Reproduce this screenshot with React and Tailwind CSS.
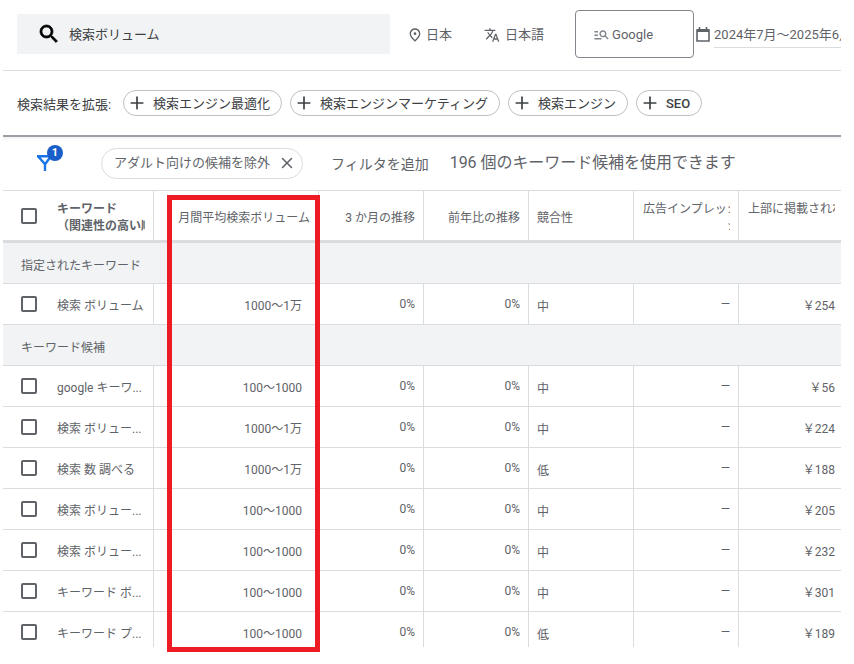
import React from "react";
import { Plus, X } from "lucide-react";

const cols = "grid grid-cols-[151px_165px_105px_105px_105px_105px_102px]";

const rows = [
  { type: "section", label: "指定されたキーワード" },
  { keyword: "検索 ボリューム", volume: "1000〜1万", comp: "中", bid: "￥254" },
  { type: "section", label: "キーワード候補" },
  { keyword: "google キーワ...", volume: "100〜1000", comp: "中", bid: "￥56" },
  { keyword: "検索 ボリュー...", volume: "1000〜1万", comp: "中", bid: "￥224" },
  { keyword: "検索 数 調べる", volume: "1000〜1万", comp: "低", bid: "￥188" },
  { keyword: "検索 ボリュー...", volume: "100〜1000", comp: "中", bid: "￥205" },
  { keyword: "検索 ボリュー...", volume: "100〜1000", comp: "中", bid: "￥232" },
  { keyword: "キーワード ボ...", volume: "100〜1000", comp: "中", bid: "￥301" },
  { keyword: "キーワード プ...", volume: "100〜1000", comp: "低", bid: "￥189" },
];

const chips = [
  { label: "検索エンジン最適化", w: "w-[159px]", text: "font-normal" },
  { label: "検索エンジンマーケティング", w: "w-[210px]", text: "font-normal" },
  { label: "検索エンジン", w: "w-[120px]", text: "font-normal" },
  { label: "SEO", w: "w-[66px]", text: "font-medium" },
];

const Icon = ({ d, className }) => (
  <svg viewBox="0 0 24 24" className={className} fill="currentColor">
    <path d={d} />
  </svg>
);

const Checkbox = () => <div className="w-4 h-4 border-2 border-[#5f6368] rounded-[2px] shrink-0" />;

export default function App() {
  return (
    <div
      className="relative w-[854px] h-[664px] overflow-hidden bg-white text-[#3c4043]"
      style={{ fontFamily: 'Roboto, "Noto Sans CJK JP", sans-serif' }}
    >
      <div className="w-[838px] h-[647px] ml-[3px] overflow-hidden">
        {/* top bar */}
        <div className="flex items-center h-[71px] border-b border-[#dadce0] pb-[1px] whitespace-nowrap">
          <div className="flex items-center shrink-0 w-[373px] h-10 ml-[14px] bg-[#f1f3f4] pl-[20px] mt-[-1px]">
            <Icon
              className="w-[24px] h-[24px] text-black stroke-current stroke-[0.7]"
              d="M15.5 14h-.79l-.28-.27C15.41 12.59 16 11.11 16 9.5 16 5.91 13.09 3 9.5 3S3 5.91 3 9.5 5.91 16 9.5 16c1.61 0 3.09-.59 4.23-1.57l.27.28v.79l5 4.99L20.49 19l-4.99-5zm-6 0C7.01 14 5 11.99 5 9.5S7.01 5 9.5 5 14 7.01 14 9.5 11.99 14 9.5 14z"
            />
            <span className="ml-[8px] pt-[1px] text-[13px] text-[#3c4043]">検索ボリューム</span>
          </div>
          <Icon
            className="w-4 h-4 shrink-0 ml-[17px] text-[#5f6368]"
            d="M12 12c-1.1 0-2-.9-2-2s.9-2 2-2 2 .9 2 2-.9 2-2 2zm6-1.8C18 6.57 15.35 4 12 4s-6 2.57-6 6.2c0 2.34 1.95 5.44 6 9.14 4.05-3.7 6-6.8 6-9.14zM12 2c4.2 0 8 3.22 8 8.2 0 3.32-2.67 7.25-8 11.8-5.33-4.55-8-8.48-8-11.8C4 5.22 7.8 2 12 2z"
          />
          <span className="ml-[3px] text-[13px] text-[#5f6368]">日本</span>
          <Icon
            className="w-[16px] h-[16px] shrink-0 ml-[32px] text-[#5f6368]"
            d="M12.87 15.07l-2.54-2.51.03-.03c1.74-1.94 2.98-4.17 3.71-6.53H17V4h-7V2H8v2H1v1.99h11.17C11.5 7.92 10.44 9.75 9 11.35 8.07 10.32 7.3 9.19 6.69 8h-2c.73 1.63 1.73 3.17 2.98 4.56l-5.09 5.02L4 19l5-5 3.11 3.11.76-2.04zM18.5 10h-2L12 22h2l1.12-3h4.75L21 22h2l-4.5-12zm-2.62 7l1.62-4.33L19.12 17h-3.24z"
          />
          <span className="ml-[5px] text-[13px] text-[#5f6368]">日本語</span>
          <div className="flex items-center shrink-0 w-[119px] h-[48px] ml-[31px] mt-[-1px] border border-[#80868b] rounded-[4px] pl-[17px]">
            <Icon
              className="w-[17px] h-[17px] text-[#80868b]"
              d="M7 9H2V7h5v2zm0 3H2v2h5v-2zm13.59 7l-3.83-3.83c-.8.52-1.74.83-2.76.83-2.76 0-5-2.24-5-5s2.24-5 5-5 5 2.24 5 5c0 1.02-.31 1.96-.83 2.75L22 17.59 20.59 19zM17 11c0-1.65-1.35-3-3-3s-3 1.35-3 3 1.35 3 3 3 3-1.35 3-3zM2 19h10v-2H2v2z"
            />
            <span className="ml-[2px] pt-[1px] text-[13px] text-[#5f6368]">Google</span>
          </div>
          <svg viewBox="0 0 14 15" className="w-[14px] h-[15px] shrink-0 ml-[2px] text-[#5f6368]" fill="none" stroke="currentColor">
            <path d="M1 3h12v11H1z" strokeWidth="1.6" />
            <path d="M1 3.5h12" strokeWidth="3" />
            <path d="M3.5 0v2M10.5 0v2" strokeWidth="1.6" />
          </svg>
          <div className="w-[127px] shrink-0 ml-[4px] h-[25px] border-b border-[#dadce0] overflow-hidden text-[13px] leading-[24px] text-[#5f6368] mt-[1px]">
            2024年7月～2025年6月
          </div>
        </div>

        {/* expand search */}
        <div className="flex items-center h-[64px] pl-[14px] pb-[1px]">
          <span className="w-[106px] pt-[4px] text-[13px] text-[#3c4043]">検索結果を拡張:</span>
          <div className="flex gap-2">
            {chips.map((chip) => (
              <div
                key={chip.label}
                className={`flex items-center h-[26px] border border-[#bdc1c6] rounded-full pl-[3px] ${chip.w}`}
              >
                <Plus className="w-[20px] h-[20px] text-[#3c4043]" strokeWidth={2} />
                <span className={`ml-[6px] pt-[2px] text-[13px] whitespace-nowrap text-[#3c4043] ${chip.text}`}>{chip.label}</span>
              </div>
            ))}
          </div>
        </div>

        {/* filter row */}
        <div className="flex items-center h-[56px] border-t-2 border-[#9aa0a6] border-b border-b-[#dadce0] shadow-[inset_0_4px_4px_-3px_rgba(0,0,0,0.08)]">
          <div className="relative w-[98px] h-full shrink-0">
            <svg viewBox="0 0 16 16" className="absolute left-[34px] top-[18px] w-[16px] h-[16px]" fill="none" stroke="#1a73e8" strokeWidth="2.4">
              <path d="M0 1.2h15M1 1.2l7 8v7M14 1.2l-6 8" />
            </svg>
            <div className="absolute left-[44px] top-[8px] w-4 h-4 rounded-full bg-[#1a5fc9] text-white text-[11px] font-bold leading-4 text-center">
              1
            </div>
          </div>
          <div className="flex items-center w-[202px] h-[31px] mt-[-1px] border border-[#dadce0] rounded-full pl-[12px]">
            <span className="text-[13px] text-[#5f6368] whitespace-nowrap">アダルト向けの候補を除外</span>
            <X className="w-[18px] h-[18px] ml-[8px] text-[#5f6368]" strokeWidth={2} />
          </div>
          <span className="ml-[28px] pt-[2px] text-[14px] text-[#5f6368] whitespace-nowrap">フィルタを追加</span>
          <span className="ml-[21px] mt-[-2px] text-[16px] tracking-[-0.05px] text-[#5f6368] whitespace-nowrap">196 個のキーワード候補を使用できます</span>
        </div>

        {/* table header */}
        <div className={`${cols} h-[52px] border-b-[3px] border-[#dadce0] text-[12px] text-[#5f6368]`}>
          <div className="flex items-center border-r border-[#dadce0] pl-[18px] overflow-hidden">
            <Checkbox />
            <div className="ml-5 mt-[4px] font-bold text-[12px] leading-[17px] text-[#5f6368] whitespace-nowrap overflow-hidden w-[88px]">
              キーワード
              <br />
              （関連性の高い順
            </div>
          </div>
          <div className="flex items-center justify-end border-r border-[#dadce0] pr-[8px] pt-[5px] whitespace-nowrap">月間平均検索ボリューム</div>
          <div className="flex items-center justify-end border-r border-[#dadce0] pr-[8px] pt-[5px] whitespace-nowrap">3 か月の推移</div>
          <div className="flex items-center justify-end border-r border-[#dadce0] pr-[8px] pt-[5px] whitespace-nowrap">前年比の推移</div>
          <div className="flex items-center border-r border-[#dadce0] pl-[8px] pt-[5px]">競合性</div>
          <div className="border-r border-[#dadce0] pl-[9px] pt-[10px] leading-[17px] overflow-hidden">
            <div className="w-[87px] whitespace-nowrap overflow-hidden">広告インプレッション</div>
            <div className="w-[87px] pl-[84px] whitespace-nowrap overflow-hidden">ション</div>
          </div>
          <div className="pl-[9px] pt-[10px] leading-[17px] overflow-hidden">
            <div className="w-[87px] whitespace-nowrap overflow-hidden">上部に掲載されれば</div>
          </div>
        </div>

        {/* table body */}
        {rows.map((row, i) =>
          row.type === "section" ? (
            <div key={i} className="flex items-center h-[41px] bg-[#f1f3f4] border-b border-[#dadce0] pl-[18px] pt-[5px] text-[12px] text-[#5f6368]">
              {row.label}
            </div>
          ) : (
            <div key={i} className={`${cols} h-[41px] border-b border-[#dadce0] text-[12px] text-[#5f6368]`}>
              <div className="flex items-center border-r border-[#dadce0] pl-[18px] pb-[1px]">
                <Checkbox />
                <span className="ml-5 pt-[4px] whitespace-nowrap overflow-hidden">{row.keyword}</span>
              </div>
              <div className="flex items-center justify-end border-r border-[#dadce0] pr-[16px] pt-[4px]">{row.volume}</div>
              <div className="flex items-center justify-end border-r border-[#dadce0] pr-[8px]">0%</div>
              <div className="flex items-center justify-end border-r border-[#dadce0] pr-[8px]">0%</div>
              <div className="flex items-center border-r border-[#dadce0] pl-[8px] pt-[5px]">{row.comp}</div>
              <div className="flex items-center justify-end border-r border-[#dadce0] pr-[8px]">—</div>
              <div className="flex items-center justify-end pr-[6px] pt-[4px]">{row.bid}</div>
            </div>
          )
        )}
      </div>

      {/* red highlight drawn over the table */}
      <div className="absolute left-[167px] top-[195px] w-[153px] h-[457px] border-[5px] border-[#ed1c24] pointer-events-none" />
    </div>
  );
}
